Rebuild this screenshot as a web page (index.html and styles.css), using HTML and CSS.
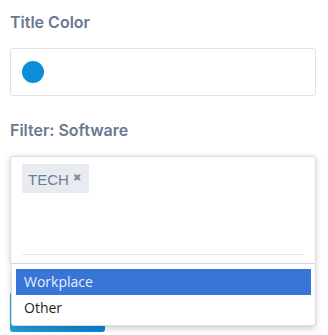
FILE: index.html
```html
<!DOCTYPE html>
<html lang="en">
<head>
    <meta charset="UTF-8">
    <meta name="viewport" content="width=device-width, initial-scale=1.0">
    <title>Widget settings</title>
    <link rel="stylesheet" href="styles.css">
</head>
<body>
    <div class="settings">
        <div class="field">
            <label class="field-label">Title Color</label>
            <div class="color-input">
                <span class="swatch"></span>
            </div>
        </div>

        <div class="field field-last">
            <label class="field-label">Filter: Software</label>
            <div class="multi-select">
                <div class="select-box">
                    <div class="tags">
                        <span class="tag">TECH <span class="tag-remove">&#10006;</span></span>
                    </div>
                    <div class="search-line"></div>
                </div>
                <ul class="options">
                    <li class="option active">Workplace</li>
                    <li class="option">Other</li>
                </ul>
            </div>
        </div>

        <button class="save-btn" aria-label="Save"></button>
    </div>
</body>
</html>
```

FILE: styles.css
```css
body {
    margin: 0;
    background: #fff;
    font-family: "Open Sans", Arial, sans-serif;
}
.settings {
    padding: 10px 12px 0 10px;
}
.field {
    margin-bottom: 24px;
}
.field-last {
    margin-bottom: 28px;
}
.field-label {
    display: block;
    font-family: Inter, "Noto Sans", sans-serif;
    font-weight: 600;
    font-size: 16px;
    line-height: 20px;
    color: #6b7891;
    margin: 2px 0 16px;
}
.color-input {
    height: 46px;
    border: 1px solid #dfe1e6;
    border-radius: 3px;
    display: flex;
    align-items: center;
    padding-left: 11px;
}
.swatch {
    width: 22px;
    height: 22px;
    border-radius: 50%;
    background: #0d8fd7;
}
.multi-select {
    position: relative;
}
.select-box {
    border: 1px solid #dcdde0;
    border-radius: 3px 3px 0 0;
    box-shadow: 0 1px 6px rgba(0, 0, 0, 0.18);
    padding: 7px 11px 8px;
    background: #fff;
}
.tags {
    display: flex;
    height: 90px;
    align-items: flex-start;
}
.tag {
    background: #e8ebef;
    color: #6a7d99;
    font-family: "Liberation Sans", Arial, sans-serif;
    font-size: 15px;
    line-height: 27px;
    padding: 0 8px 0 6px;
}
.tag-remove {
    font-size: 10px;
    color: #8a8d92;
    vertical-align: 4px;
}
.search-line {
    border-top: 1px solid #e6e9ec;
}
.options {
    position: absolute;
    top: 100%;
    left: 1px;
    right: 0;
    margin: 0;
    padding: 5px 4px 4px;
    list-style: none;
    background: #fff;
    border: 1px solid #dcdde0;
    border-top: none;
    border-radius: 0 0 3px 3px;
    box-shadow: 0 3px 6px rgba(0, 0, 0, 0.18);
}
.option {
    font-size: 14px;
    line-height: 26px;
    padding: 0 8px;
    color: #222;
}
.option.active {
    background: #3875d7;
    color: #e9effa;
}
.save-btn {
    display: block;
    width: 95px;
    height: 40px;
    border: none;
    border-radius: 3px;
    background: linear-gradient(90deg, #22a3e2, #0a86d8);
}
```
